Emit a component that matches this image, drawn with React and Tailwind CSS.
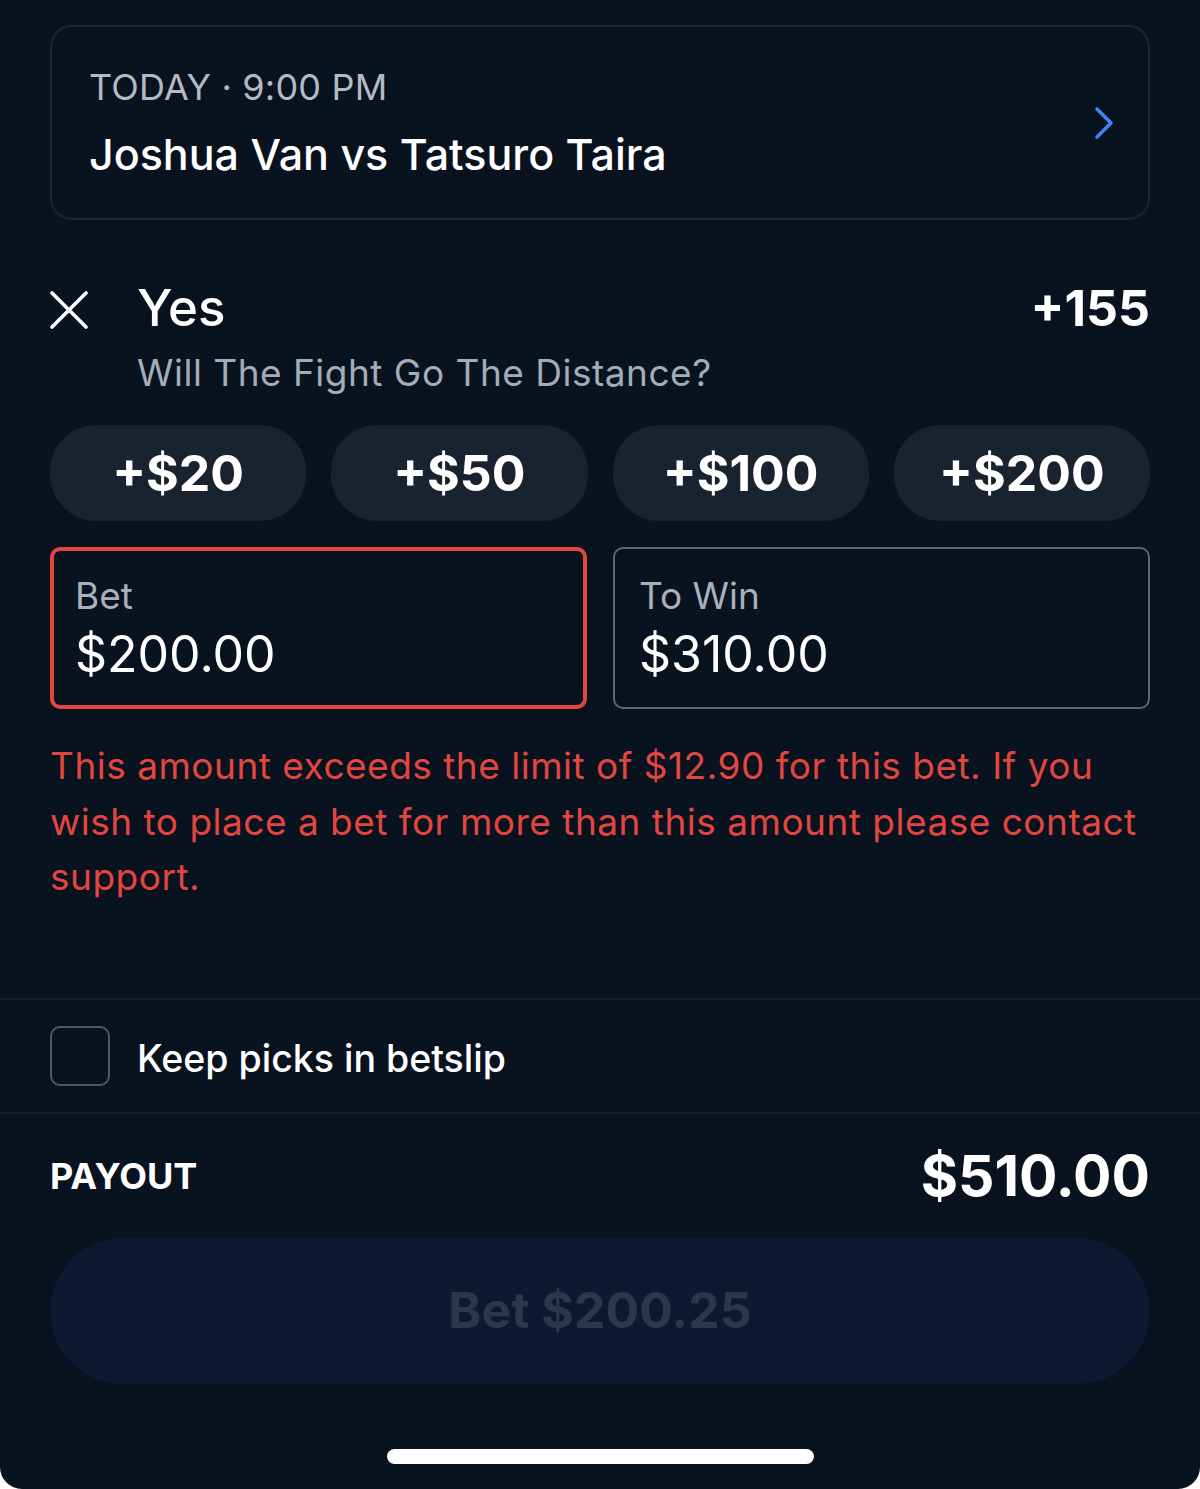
const chips = ["+$20", "+$50", "+$100", "+$200"];

function CloseIcon() {
  return (
    <svg width="38" height="38" viewBox="0 0 38 38" fill="none" stroke="currentColor" strokeWidth="3.6" strokeLinecap="round">
      <path d="M2 2 L36 36 M36 2 L2 36" />
    </svg>
  );
}

function Chevron() {
  return (
    <svg width="20" height="34" viewBox="0 0 20 34" fill="none" stroke="#3d86f5" strokeWidth="3.6" strokeLinecap="round" strokeLinejoin="round">
      <path d="M3 3 L17 17 L3 31" />
    </svg>
  );
}

export default function App() {
  return (
    <div className="bg-white w-[1200px] h-[1489px]" style={{ fontFamily: "Inter, 'Noto Sans', sans-serif" }}>
      <div className="bg-[#09121f] h-full rounded-b-[22px] px-[50px] pt-[25px] flex flex-col text-white">
        {/* event card */}
        <div className="h-[195px] rounded-[22px] border-2 border-[#1c2634] pl-[37px] pr-[34px] flex items-center justify-between">
          <div className="flex flex-col">
            <span className="text-[36px] leading-none text-[#b3bac5] tracking-[0.2px]">TODAY · 9:00 PM</span>
            <span className="text-[43px] leading-none mt-[28px] font-medium">Joshua Van vs Tatsuro Taira</span>
          </div>
          <Chevron />
        </div>

        {/* selection */}
        <div className="mt-[60px] flex items-start">
          <div className="mt-[11px]">
            <CloseIcon />
          </div>
          <div className="ml-[49px] flex-1 flex flex-col">
            <div className="flex items-center justify-between">
              <span className="text-[51px] leading-[56px] font-medium">Yes</span>
              <span className="text-[50px] leading-[56px] font-bold">+155</span>
            </div>
            <span className="text-[37px] leading-none mt-[18px] text-[#a3acb9] tracking-[0.5px]">Will The Fight Go The Distance?</span>
          </div>
        </div>

        {/* quick amounts */}
        <div className="mt-[34px] grid grid-cols-4 gap-[25px]">
          {chips.map((c) => (
            <div key={c} className="h-[96px] rounded-[46px] bg-[#19222f] flex items-center justify-center text-[50px] font-bold">
              {c}
            </div>
          ))}
        </div>

        {/* bet / to win */}
        <div className="mt-[26px] grid grid-cols-2 gap-[26px]">
          <div className="h-[162px] rounded-[10px] border-[4px] border-[#e2463f] px-[21px] flex flex-col justify-center">
            <span className="text-[37px] leading-none text-[#a8b0bc]">Bet</span>
            <span className="text-[50px] leading-none mt-[15px]">$200.00</span>
          </div>
          <div className="h-[162px] rounded-[10px] border-2 border-[#5a6576] px-[24px] flex flex-col justify-center">
            <span className="text-[37px] leading-none text-[#a8b0bc]">To Win</span>
            <span className="text-[50px] leading-none mt-[15px]">$310.00</span>
          </div>
        </div>

        <p className="mt-[29px] text-[37px] leading-[55.5px] text-[#e2463f] tracking-[0.5px]">
          This amount exceeds the limit of $12.90 for this bet. If you wish to place a bet for more than this amount please contact support.
        </p>

        {/* keep picks */}
        <div className="mt-[93px] -mx-[50px] border-t-2 border-b-2 border-[#151e2b] h-[116px] px-[50px] flex items-center">
          <div className="w-[60px] h-[60px] rounded-[10px] border-2 border-[#4c5768]" />
          <span className="ml-[27px] pt-[8px] text-[37.5px] font-medium">Keep picks in betslip</span>
        </div>

        {/* payout */}
        <div className="h-[124px] flex items-center justify-between">
          <span className="text-[36px] font-bold">PAYOUT</span>
          <span className="text-[57px] font-bold">$510.00</span>
        </div>

        <div className="h-[146px] rounded-full bg-[#0e1830] flex items-center justify-center text-[50px] font-bold text-[#2b374b]">
          Bet $200.25
        </div>

        <div className="mt-[65px] self-center w-[427px] h-[15px] rounded-full bg-white" />
      </div>
    </div>
  );
}
